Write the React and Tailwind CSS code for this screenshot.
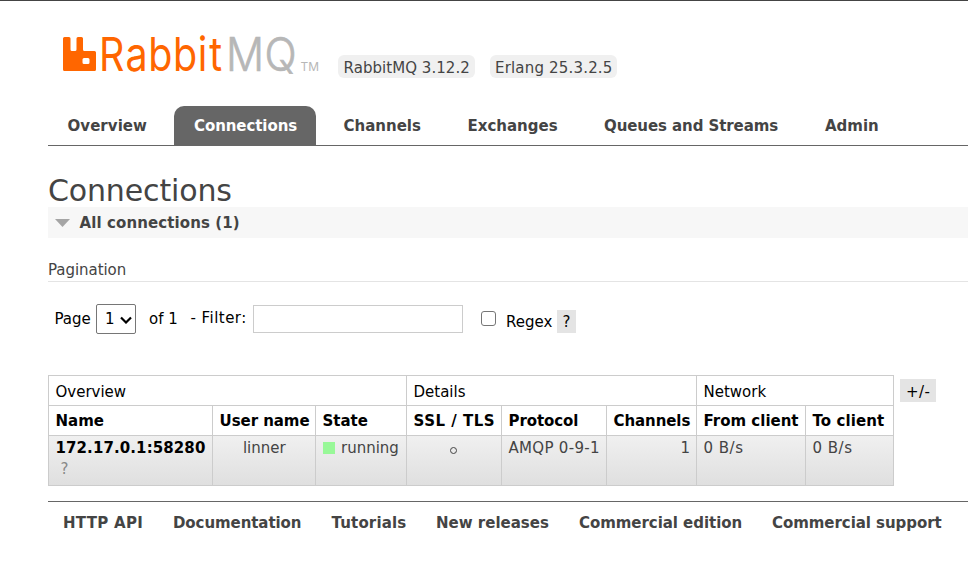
const tabs = [
  { label: "Overview", cls: "w-[119px] mr-[7px] pl-[19.5px] tracking-[0.05px]" },
  { label: "Connections", cls: "w-[142px] mr-[7px] pl-5 bg-[#666] text-white rounded-t-[10px] tracking-[-0.08px]" },
  { label: "Channels", cls: "w-[118px] mr-[6px] pl-[20.5px]" },
  { label: "Exchanges", cls: "w-[130px] mr-[7px] pl-[20.5px]" },
  { label: "Queues and Streams", cls: "w-[214px] mr-[7px] pl-5 tracking-[-0.08px]" },
  { label: "Admin", cls: "w-[94px] pl-5" },
];

const groups = [
  { label: "Overview", cls: "w-[358px]" },
  { label: "Details", cls: "w-[290px]" },
  { label: "Network", cls: "w-[197px]" },
];

const columns = [
  { label: "Name", cls: "w-[164px]" },
  { label: "User name", cls: "w-[103px] tracking-[-0.05px]" },
  { label: "State", cls: "w-[91px]" },
  { label: "SSL / TLS", cls: "w-[95px] tracking-[0.5px]" },
  { label: "Protocol", cls: "w-[105px] tracking-[-0.08px]" },
  { label: "Channels", cls: "w-[90px] tracking-[-0.08px]" },
  { label: "From client", cls: "w-[109px]" },
  { label: "To client", cls: "w-[88px] tracking-[0.1px]" },
];

const links = [
  { label: "HTTP API", cls: "w-[110px] tracking-[0.3px]" },
  { label: "Documentation", cls: "w-[158px] tracking-[-0.08px]" },
  { label: "Tutorials", cls: "w-[105px] pl-[0.5px] tracking-[0.15px]" },
  { label: "New releases", cls: "w-[143px]" },
  { label: "Commercial edition", cls: "w-[193px] tracking-[-0.05px]" },
  { label: "Commercial support", cls: "w-[180px] tracking-[-0.05px]" },
];

const cell = "border-r border-b border-[#ccc] pl-[6.5px] whitespace-nowrap shrink-0";

function Logo() {
  return (
    <svg width="258" height="42" viewBox="0 0 258 42" className="shrink-0 overflow-visible">
      <path
        fill="#f60"
        d="M1.500 5h4.500q1.500 0 1.500 1.500v11q0 1.500 1.500 1.500h3q1.500 0 1.500-1.500v-11Q13.500 5 15 5h3.500Q20 5 20 6.500v11q0 1.500 1.500 1.500h10q1.500 0 1.500 1.500v17q0 1.500-1.500 1.500h-30Q0 39 0 37.500v-31Q0 5 1.500 5zM21 26q-1.500 0-1.500 1.500v3q0 1.500 1.500 1.500h4q1.500 0 1.500-1.500v-3q0-1.500-1.500-1.500z"
      />
      <g fontFamily="Inter, 'Open Sans', sans-serif">
        <text transform="scale(0.84 1)" x="43 74.500 101.500 131 160.500 174" y="39" fontSize="47" fontWeight="400" fill="#f60">Rabbit</text>
        <text transform="scale(0.9 1)" x="181 224" y="39" fontSize="47" fontWeight="300" fill="#b7b7b7" stroke="#b7b7b7" strokeWidth="0.700">MQ</text>
        <text x="237.500" y="39" fontSize="12" fill="#b7b7b7" textLength="18.500" lengthAdjust="spacingAndGlyphs">TM</text>
      </g>
    </svg>
  );
}

export default function App() {
  return (
    <div className="h-[562px] w-[968px] overflow-hidden border-t border-[#444] bg-white pl-12 font-[Verdana,'DejaVu_Sans',sans-serif] text-[15px] leading-[20px] text-[#444]">
      <header className="flex h-[105px] pl-[15px] pt-[31px]">
        <Logo />
        <div className="ml-[17px] mt-[23px] flex gap-[15px] whitespace-nowrap">
          <span className="h-[23px] w-[137px] rounded-[6px] bg-[#f0f0f0] pl-[5.5px] pt-[3px] tracking-[0.05px]">RabbitMQ 3.12.2</span>
          <span className="h-[23px] w-[127px] rounded-[6px] bg-[#f0f0f0] pl-[5px] pt-[3px] tracking-[0.18px]">Erlang 25.3.2.5</span>
        </div>
      </header>
      <nav className="flex h-10 border-b border-[#666] font-bold">
        {tabs.map((t) => (
          <a key={t.label} className={`shrink-0 whitespace-nowrap pt-[10px] ${t.cls}`}>{t.label}</a>
        ))}
      </nav>
      <h1 className="h-[61px] pt-[27px] text-[30px] leading-[36px] tracking-[-0.15px]">Connections</h1>
      <h2 className="flex h-[31px] bg-[#f7f7f7] pl-[7px] pt-[6px] font-bold">
        <svg width="15" height="8" viewBox="0 0 15 8" className="mr-[9.5px] mt-[6px]"><path d="M0 0h15L7.500 8z" fill="#a5a5a5" /></svg>
        <span className="tracking-[0.1px]">All connections (1)</span>
      </h2>
      <h3 className="mt-[22px] h-[22px] border-b border-[#e4e4e4] tracking-[-0.05px]">Pagination</h3>
      <div className="flex h-[93px] pl-[6px] pt-[22px] text-black">
        <span className="mt-[5px] w-[42px] pl-[0.5px]">Page</span>
        <div className="flex h-[30px] w-10 rounded-[2px] border border-[#767676] pl-[8px] pt-[4px]">
          <span>1</span>
          <svg width="12" height="8" viewBox="0 0 12 8" className="ml-[5px] mt-[7px]"><path d="M1 1.500l5 5 5-5" fill="none" stroke="#000" strokeWidth="2.200" /></svg>
        </div>
        <span className="ml-[13px] mt-[5px] w-[41px] whitespace-nowrap">of 1</span>
        <span className="mt-[4px] w-[63px] whitespace-nowrap pl-[0.5px] tracking-[0.45px]">- Filter:</span>
        <div className="mt-[1px] h-[28px] w-[210px] border border-[#ccc]" />
        <div className="ml-[18px] mt-[7px] h-[15px] w-[15px] rounded-[3px] border border-[#767676]" />
        <span className="ml-[10px] mt-[8px] w-[51px]">Regex</span>
        <span className="mt-[6px] h-[23px] w-[19px] bg-[#e4e4e4] pt-[2px] text-center">?</span>
      </div>
      <div className="flex h-[126px] text-black">
        <div className="h-[111px] w-[846px] border-l border-t border-[#ccc]">
          <div className="flex h-[30px]">
            {groups.map((g) => (
              <div key={g.label} className={`${cell} pt-[6px] ${g.cls}`}>{g.label}</div>
            ))}
          </div>
          <div className="flex h-[30px] font-bold">
            {columns.map((c) => (
              <div key={c.label} className={`${cell} pt-[5px] ${c.cls}`}>{c.label}</div>
            ))}
          </div>
          <div className="flex h-[50px] bg-linear-to-b from-[#f0f0f0] to-[#dfdfdf] text-[#444]">
            <div className={`${cell} w-[164px] pt-[2px]`}>
              <div className="font-bold tracking-[0.1px] text-black">172.17.0.1:58280</div>
              <div className="pl-[5px] pt-px text-[#888]">?</div>
            </div>
            <div className={`${cell} w-[103px] pr-[6px] pt-[2px] text-center`}>linner</div>
            <div className={`${cell} flex w-[91px] pt-[2px]`}>
              <span className="mr-[6.5px] mt-[4px] h-3 w-3 bg-[#98f898]" />
              <span>running</span>
            </div>
            <div className={`${cell} flex w-[95px] justify-center pr-[7px] pt-[11px]`}>
              <span className="h-[7px] w-[7px] rounded-full border border-[#444]" />
            </div>
            <div className={`${cell} w-[105px] pt-[2px] tracking-[0.3px]`}>AMQP 0-9-1</div>
            <div className={`${cell} w-[90px] pr-[6px] pt-[2px] text-right`}>1</div>
            <div className={`${cell} w-[109px] pt-[2px] tracking-[0.5px]`}>0 B/s</div>
            <div className={`${cell} w-[88px] pt-[2px] tracking-[0.5px]`}>0 B/s</div>
          </div>
        </div>
        <span className="ml-[6px] mt-[4px] h-[23px] w-9 whitespace-nowrap bg-[#e4e4e4] pl-[6px] pt-[3px] tracking-[0.5px]">+/-</span>
      </div>
      <footer className="flex border-t border-[#666] pl-[15px] pt-[11px] font-bold">
        {links.map((l) => (
          <a key={l.label} className={`shrink-0 whitespace-nowrap ${l.cls}`}>{l.label}</a>
        ))}
      </footer>
    </div>
  );
}
